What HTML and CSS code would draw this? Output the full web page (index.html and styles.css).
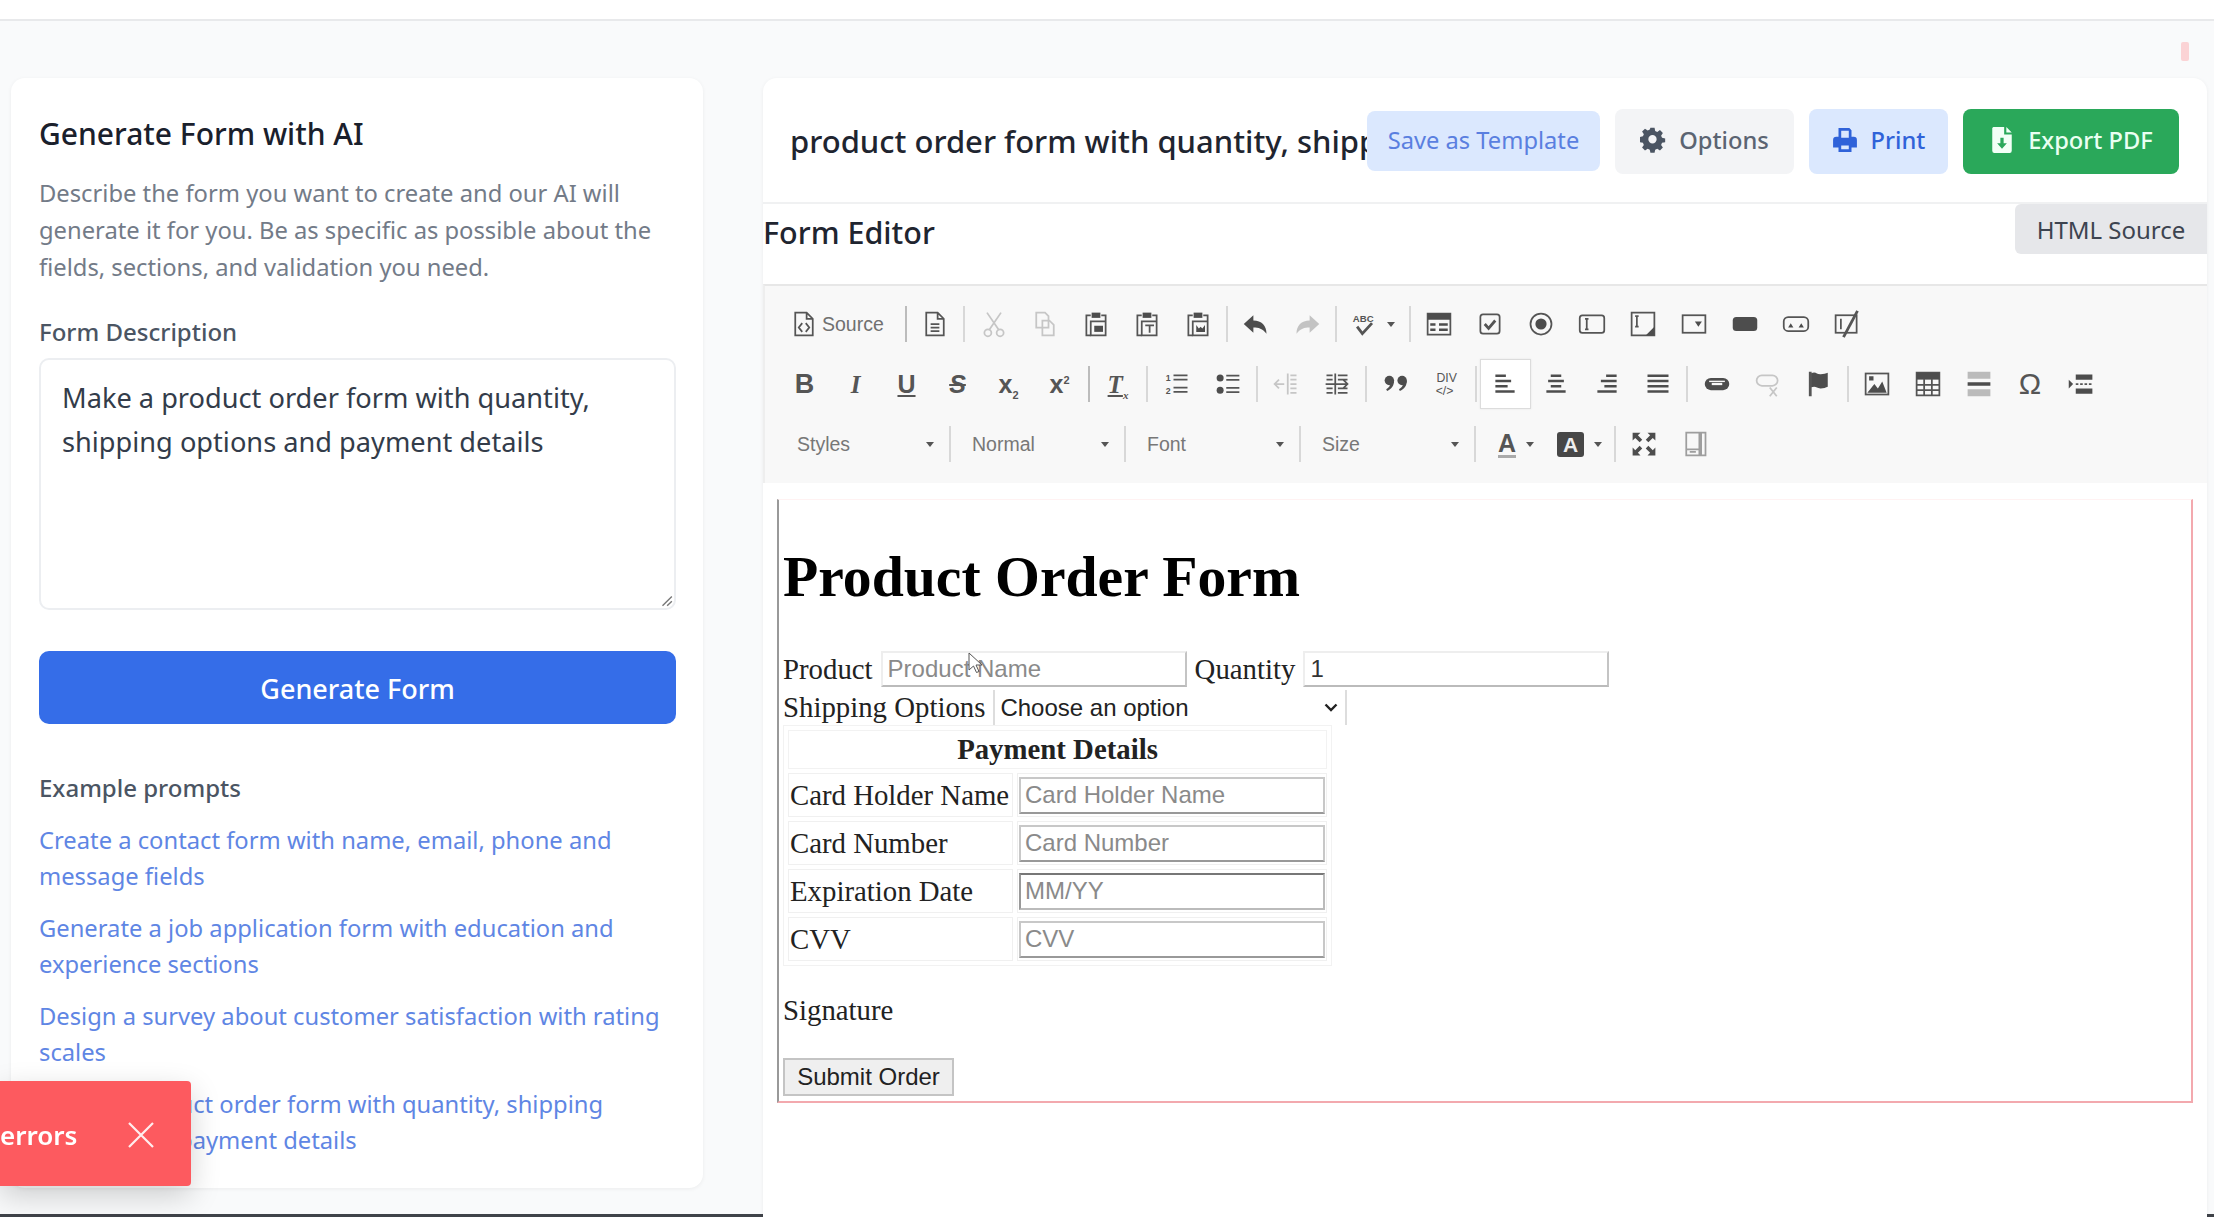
FILE: index.html
```html
<!DOCTYPE html>
<html lang="en">
<head>
    <meta charset="UTF-8">
    <meta name="viewport" content="width=device-width, initial-scale=1.0">
    <title>Generate Form with AI</title>
    <link rel="stylesheet" href="styles.css">
</head>
<body>
<div class="page">
    <div class="topbar"></div>
    <div class="strip"><span class="strip-mark"></span></div>

    <div class="main">
        <!-- left panel -->
        <aside class="panel">
            <h2 class="panel-title">Generate Form with AI</h2>
            <p class="panel-desc">Describe the form you want to create and our AI will generate it for you. Be as specific as possible about the fields, sections, and validation you need.</p>
            <label class="panel-label">Form Description</label>
            <div class="prompt-box">
                Make a product order form with quantity, shipping options and payment details
                <svg class="grip" viewBox="0 0 12 12"><path d="M11 3 3 11M11 7 7 11" stroke="#777" stroke-width="1.2" fill="none"/></svg>
            </div>
            <button class="generate-btn">Generate Form</button>
            <h3 class="examples-title">Example prompts</h3>
            <ul class="examples">
                <li>Create a contact form with name, email, phone and message fields</li>
                <li>Generate a job application form with education and experience sections</li>
                <li>Design a survey about customer satisfaction with rating scales</li>
                <li>Make a product order form with quantity, shipping options and payment details</li>
            </ul>
        </aside>

        <!-- right panel -->
        <section class="workspace">
            <div class="doc-head">
                <input class="doc-title" type="text" value="product order form with quantity, shipping options and payment details">
                <div class="actions">
                    <button class="act act-template">Save as Template</button>
                    <button class="act act-options">
                        <svg class="act-ic" viewBox="0 0 24 24"><path fill="#4b5563" fill-rule="evenodd" d="M10 1h4l.6 3 2 .9 2.6-1.7 2.8 2.8-1.7 2.6.9 2 3 .6v3.6l-3 .6-.9 2 1.7 2.6-2.8 2.8-2.6-1.7-2 .9-.6 3h-4l-.6-3-2-.9-2.6 1.7-2.8-2.8 1.7-2.6-.9-2-3-.6V9.800l3-.6.9-2-1.7-2.6 2.8-2.8 2.6 1.7 2-.9zM12 8a4 4 0 1 0 0 8 4 4 0 0 0 0-8z" transform="translate(0 -.2) scale(.96)"/></svg>
                        Options
                    </button>
                    <button class="act act-print">
                        <svg class="act-ic" viewBox="0 0 24 24"><path fill="#2f62d9" fill-rule="evenodd" d="M6 1h10l2 2v6h2a3 3 0 0 1 3 3v7h-5v4H6v-4H1v-7a3 3 0 0 1 3-3h2zm2.500 2.500V10h7V3.500zm0 13.500v3.500h7V17z"/></svg>
                        Print
                    </button>
                    <button class="act act-export">
                        <svg class="act-ic" viewBox="0 0 24 24"><path fill="#f2fff6" fill-rule="evenodd" d="M4 0h10v7h7v15a2 2 0 0 1-2 2H5a2 2 0 0 1-2-2V1zM16 0l5 5h-5zM10.500 10v5H7.500l4.500 5 4.500-5h-3v-5z"/></svg>
                        Export PDF
                    </button>
                </div>
            </div>

            <div class="editor-head">
                <h3 class="editor-title">Form Editor</h3>
                <button class="source-btn">HTML Source</button>
            </div>

            <div class="toolbar">
                <div class="tb-row">
                    <span class="tb-btn tb-source"><svg class="ic" viewBox="0 0 16 16"><path d="M3 1.500h6.500L13 5v9.500H3zM9.500 1.500V5H13" class="ol"/><path d="M7 7.500 5 10l2 2.500M9 7.500l2 2.500-2 2.500" class="ol"/></svg><span class="tb-text">Source</span></span>
                    <i class="sep"></i>
                    <span class="tb-btn"><svg class="ic" viewBox="0 0 16 16"><path d="M3 1.500h6.500L13 5v9.500H3zM9.500 1.500V5H13" class="ol"/><path d="M5.500 8h5M5.500 10h5M5.500 12h5" class="ol"/></svg></span>
                    <i class="sep sep-soft"></i>
                    <span class="tb-btn off"><svg class="ic" viewBox="0 0 16 16"><circle cx="4.500" cy="13" r="2" class="ol"/><circle cx="11.500" cy="13" r="2" class="ol"/><path d="M5.500 11 12 1.500M10.500 11 4 1.500" class="ol"/></svg></span>
                    <span class="tb-btn off"><svg class="ic" viewBox="0 0 16 16"><path d="M3 1.500h5l2 2V10H3zM6.500 6h4l2.500 2.500v6H6.500z" class="ol"/></svg></span>
                    <span class="tb-btn"><svg class="ic" viewBox="0 0 16 16"><path d="M5 3H2.500v11.500H5" class="ol"/><path d="M5.500 1.500h5v3h-5z" class="fl"/><path d="M11 3h2.500v4M5 6.500h8.500v8H5z" class="ol"/><path d="M7 9h5v3.500H7z" class="fl"/></svg></span>
                    <span class="tb-btn"><svg class="ic" viewBox="0 0 16 16"><path d="M5 3H2.500v11.500H5" class="ol"/><path d="M5.500 1.500h5v3h-5z" class="fl"/><path d="M11 3h2.500v4M5 6.500h8.500v8H5z" class="ol"/><path d="M7 8.800h5M9.500 8.800v4.200" class="ol"/></svg></span>
                    <span class="tb-btn"><svg class="ic" viewBox="0 0 16 16"><path d="M5 3H2.500v11.500H5" class="ol"/><path d="M5.500 1.500h5v3h-5z" class="fl"/><path d="M11 3h2.500v4M5 6.500h8.500v8H5z" class="ol"/><path d="M7 8.500v4h5v-4l-1.500 2-1-1-1 1z" class="fl"/></svg></span>
                    <i class="sep sep-soft"></i>
                    <span class="tb-btn"><svg class="ic" viewBox="0 0 16 16"><path d="M6.500 3 1 8l5.500 5v-3c3 0 5.200.6 7.500 3.500 0-4.500-2.800-7.500-7.500-7.500z" class="fl"/></svg></span>
                    <span class="tb-btn off"><svg class="ic" viewBox="0 0 16 16"><path d="M9.500 3 15 8l-5.500 5v-3c-3 0-5.200.6-7.500 3.500C2 9 4.800 6 9.500 6z" class="fl"/></svg></span>
                    <i class="sep sep-soft"></i>
                    <span class="tb-btn tb-spell"><svg class="ic" viewBox="0 0 16 16"><text x="1" y="7" class="ic-text">ABC</text><path d="m3.500 9.500 3 4 5.500-6" class="ol ol-thick"/></svg><i class="caret"></i></span>
                    <i class="sep sep-soft"></i>
                    <span class="tb-btn"><svg class="ic" viewBox="0 0 16 16"><path d="M1.500 2h13v12h-13z" class="ol"/><path d="M1.500 2h13v3.500h-13zM3 7.500h3v1.500H3zM8 7.500h5v1.500H8zM3 10.500h3V12H3zM8 10.500h5V12H8z" class="fl"/></svg></span>
                    <span class="tb-btn"><svg class="ic" viewBox="0 0 16 16"><rect x="2.500" y="2.500" width="11" height="11" rx="1.500" class="ol"/><path d="m5 8 2.200 2.500L11 6" class="ol ol-thick"/></svg></span>
                    <span class="tb-btn"><svg class="ic" viewBox="0 0 16 16"><circle cx="8" cy="8" r="6" class="ol"/><circle cx="8" cy="8" r="3.200" class="fl"/></svg></span>
                    <span class="tb-btn"><svg class="ic" viewBox="0 0 16 16"><rect x="1" y="3" width="14" height="10" rx="1.500" class="ol"/><path d="M5 5v6M4 5h2M4 11h2" class="ol"/></svg></span>
                    <span class="tb-btn"><svg class="ic" viewBox="0 0 16 16"><rect x="1.500" y="1.500" width="13" height="13" class="ol"/><path d="M4.500 3.500v6M3.500 3.500h2M3.500 9.500h2" class="ol"/><path d="M14.500 9.500v5h-5z" class="fl"/></svg></span>
                    <span class="tb-btn"><svg class="ic" viewBox="0 0 16 16"><rect x="1.500" y="3" width="13" height="10" class="ol"/><path d="M8.500 6.500h4l-2 3z" class="fl"/></svg></span>
                    <span class="tb-btn"><svg class="ic" viewBox="0 0 16 16"><rect x="1" y="4" width="14" height="8" rx="2" class="fl"/></svg></span>
                    <span class="tb-btn"><svg class="ic" viewBox="0 0 16 16"><rect x="1" y="4" width="14" height="8" rx="2.500" class="ol"/><path d="M3.500 10 5 7.500 6.500 10zM9.500 10 11 7.500 12.500 10z" class="fl"/></svg></span>
                    <span class="tb-btn"><svg class="ic" viewBox="0 0 16 16"><rect x="1.500" y="3" width="12" height="10" class="ol"/><path d="M4.500 5v6" class="ol"/><path d="M14 .5 6 15.500" class="ol ol-thick"/></svg></span>
                </div>

                <div class="tb-row">
                    <span class="tb-btn"><b class="gl gl-b">B</b></span>
                    <span class="tb-btn"><b class="gl gl-i">I</b></span>
                    <span class="tb-btn"><b class="gl gl-u">U</b></span>
                    <span class="tb-btn"><b class="gl gl-s">S</b></span>
                    <span class="tb-btn"><b class="gl gl-x">x<sub>2</sub></b></span>
                    <span class="tb-btn"><b class="gl gl-x">x<sup>2</sup></b></span>
                    <i class="sep"></i>
                    <span class="tb-btn"><b class="gl gl-i gl-clear">T<sub>x</sub></b></span>
                    <i class="sep sep-soft"></i>
                    <span class="tb-btn"><svg class="ic" viewBox="0 0 16 16"><text x="1.500" y="6.500" class="ic-text ic-num">1</text><text x="1.500" y="13.500" class="ic-text ic-num">2</text><path d="M6 3h8M6 5.500h8M6 10h8M6 12.500h8" class="ol"/></svg></span>
                    <span class="tb-btn"><svg class="ic" viewBox="0 0 16 16"><circle cx="3.500" cy="4.500" r="2" class="fl"/><circle cx="3.500" cy="11.500" r="2" class="fl"/><path d="M7 3.200h7.500M7 5.700h7.500M7 10.200h7.500M7 12.700h7.500" class="ol"/></svg></span>
                    <i class="sep sep-soft"></i>
                    <span class="tb-btn off"><svg class="ic" viewBox="0 0 16 16"><path d="M9 2v12M10.500 3H14M10.500 5.500H14M10.500 8H14M10.500 10.500H14M10.500 13H14M1.500 8H7M4 5.500 1.500 8 4 10.500" class="ol"/></svg></span>
                    <span class="tb-btn"><svg class="ic" viewBox="0 0 16 16"><path d="M7 2v12M2 3h3.500M2 5.500h3.500M2 10.500h3.500M2 13h3.500M8.500 3H14M8.500 5.500H14M8.500 10.500H14M8.500 13H14M1.500 8H14M11.500 5.500 14 8l-2.500 2.500" class="ol"/></svg></span>
                    <i class="sep sep-soft"></i>
                    <span class="tb-btn"><svg class="ic" viewBox="0 0 16 16"><circle cx="4.200" cy="6" r="2.700" class="fl"/><path d="M6.900 6c0 3-1.500 5-4 6l-.5-1c1.500-.8 2.300-2 2.300-3z" class="fl"/><circle cx="11.500" cy="6" r="2.700" class="fl"/><path d="M14.200 6c0 3-1.500 5-4 6l-.5-1c1.500-.8 2.300-2 2.300-3z" class="fl"/></svg></span>
                    <span class="tb-btn"><svg class="ic" viewBox="0 0 16 16"><text x="2" y="7" class="ic-text ic-div">DIV</text><text x="1.500" y="14" class="ic-text ic-div">&lt;/&gt;</text></svg></span>
                    <i class="sep sep-soft"></i>
                    <span class="tb-btn active"><svg class="ic" viewBox="0 0 16 16"><path d="M2.500 2.500h6v1.500h-6zM2.500 5.500h9V7h-9zM2.500 8.500h7V10h-7zM2.500 11.500h11V13h-11z" class="fl"/></svg></span>
                    <span class="tb-btn"><svg class="ic" viewBox="0 0 16 16"><path d="M5 2.500h6v1.500H5zM3.500 5.500h9V7h-9zM5 8.500h6V10H5zM2.500 11.500h11V13h-11z" class="fl"/></svg></span>
                    <span class="tb-btn"><svg class="ic" viewBox="0 0 16 16"><path d="M7.500 2.500h6v1.500h-6zM4.500 5.500h9V7h-9zM6.500 8.500h7V10h-7zM2.500 11.500h11V13h-11z" class="fl"/></svg></span>
                    <span class="tb-btn"><svg class="ic" viewBox="0 0 16 16"><path d="M2 2.500h12V4H2zM2 5.500h12V7H2zM2 8.500h12V10H2zM2 11.500h12V13H2z" class="fl"/></svg></span>
                    <i class="sep sep-soft"></i>
                    <span class="tb-btn"><svg class="ic" viewBox="0 0 16 16"><rect x="1" y="4.500" width="14" height="7" rx="3.500" class="fl"/><path d="M5 8h6" stroke="#f8f8f8" stroke-width="1.300"/><path d="M3.500 6.500h9" stroke="#f8f8f8" stroke-width=".8"/></svg></span>
                    <span class="tb-btn off"><svg class="ic" viewBox="0 0 16 16"><rect x="1.500" y="3" width="12" height="6" rx="3" class="ol"/><path d="m9 10 4 5M13 10l-4 5" class="ol"/></svg></span>
                    <span class="tb-btn"><svg class="ic" viewBox="0 0 16 16"><path d="M3 1v14" class="ol ol-thick"/><path d="M3.500 1.800c3-1.200 3 .8 5.500.6 1.500-.1 3-.5 4-.9v8c-1 .5-2.500.9-4 1-2.500.1-2.500-1.600-5.500-.6z" class="fl"/></svg></span>
                    <i class="sep sep-soft"></i>
                    <span class="tb-btn"><svg class="ic" viewBox="0 0 16 16"><rect x="1.500" y="2" width="13" height="12" class="ol"/><path d="m2.500 13 4-5 2 2.500 2.500-4 2.500 6.500zM3.500 3.500h2.500V6H3.500z" class="fl"/></svg></span>
                    <span class="tb-btn"><svg class="ic" viewBox="0 0 16 16"><path d="M1.500 1.500h13v13h-13z" class="ol"/><path d="M1.500 1.500h13v4h-13z" class="fl"/><path d="M1.500 8.500h13M1.500 11.500h13M5.800 5v9.500M10.200 5v9.500" class="ol"/></svg></span>
                    <span class="tb-btn"><svg class="ic" viewBox="0 0 16 16"><path d="M1.500 1h13v4h-13zM1.500 11h13v4h-13z" class="fl fl-soft"/><path d="M1.500 7h13v2h-13z" class="fl"/></svg></span>
                    <span class="tb-btn"><b class="gl gl-om">&Omega;</b></span>
                    <span class="tb-btn"><svg class="ic" viewBox="0 0 16 16"><path d="M1 5.500 3.500 8 1 10.500z" class="fl"/><path d="M5 2.500h9.500V5.500H5zM5 10.500h9.500v3H5z" class="fl"/><path d="M5 8h9.500" class="ol ol-dash"/></svg></span>
                </div>

                <div class="tb-row">
                    <span class="combo">Styles<i class="caret"></i></span><i class="sep sep-soft"></i>
                    <span class="combo">Normal<i class="caret"></i></span><i class="sep sep-soft"></i>
                    <span class="combo">Font<i class="caret"></i></span><i class="sep sep-soft"></i>
                    <span class="combo">Size<i class="caret"></i></span><i class="sep sep-soft"></i>
                    <span class="tb-btn tb-color"><b class="gl gl-a">A</b><i class="caret"></i></span>
                    <span class="tb-btn tb-color-bg"><b class="gl gl-abg">A</b><i class="caret"></i></span>
                    <i class="sep sep-soft"></i>
                    <span class="tb-btn"><svg class="ic" viewBox="0 0 16 16"><path d="M1.500 1.500h4.500L4.500 3 7 5.500 5.500 7 3 4.500 1.500 6zM14.500 1.500H10L11.500 3 9 5.500 10.500 7 13 4.500 14.500 6zM1.500 14.500H6L4.500 13 7 10.500 5.500 9 3 11.500 1.500 10zM14.500 14.500H10l1.500-1.500L9 10.500 10.500 9 13 11.500 14.500 10z" class="fl"/></svg></span>
                    <span class="tb-btn off-mid"><svg class="ic" viewBox="0 0 16 16"><path d="M3 1.500h7.500v13H3zM3 11h7.500M11.500 1.500h2.500v13h-2.500zM5 12.500h3.500" class="ol"/></svg></span>
                </div>
            </div>

            <!-- form preview -->
            <div class="preview">
                <div class="sheet">
                    <h1 class="f-title">Product Order Form</h1>
                    <div class="f-row">
                        <label class="f-label">Product</label>
                        <input class="f-input" type="text" placeholder="Product Name">
                        <label class="f-label">Quantity</label>
                        <input class="f-input" type="text" value="1">
                    </div>
                    <div class="f-row f-row-tight">
                        <label class="f-label">Shipping Options</label>
                        <select class="f-select"><option>Choose an option</option></select>
                    </div>
                    <table class="f-table">
                        <tr><th class="f-th" colspan="2">Payment Details</th></tr>
                        <tr><td class="f-td f-td-label">Card Holder Name</td><td class="f-td"><input class="f-cell-input" type="text" placeholder="Card Holder Name"></td></tr>
                        <tr><td class="f-td f-td-label">Card Number</td><td class="f-td"><input class="f-cell-input" type="text" placeholder="Card Number"></td></tr>
                        <tr><td class="f-td f-td-label">Expiration Date</td><td class="f-td"><input class="f-cell-input f-cell-dark" type="text" placeholder="MM/YY"></td></tr>
                        <tr><td class="f-td f-td-label">CVV</td><td class="f-td"><input class="f-cell-input" type="text" placeholder="CVV"></td></tr>
                    </table>
                    <p class="f-sign">Signature</p>
                    <button class="f-submit">Submit Order</button>
                    <svg class="cursor" viewBox="0 0 14 22"><path d="M1 1v17l4.500-4 3 6.500 2.500-1-3-6.500h6z" fill="#fff" stroke="#555" stroke-width="1"/></svg>
                </div>
            </div>
        </section>
    </div>
</div>

<!-- toast is partly off screen -->
<div class="toast">
    <span class="toast-text">errors</span>
    <svg class="toast-x" viewBox="0 0 26 26"><path d="M1 1l24 24M25 1 1 25" stroke="#fff" stroke-width="2.200" opacity=".9"/></svg>
</div>
</body>
</html>
```

FILE: styles.css
```css
* {
    box-sizing: border-box;
}
html, body {
    margin: 0;
    height: 100%;
    overflow: hidden;
}
body {
    font-family: "Noto Sans", sans-serif;
    background: #f9fafb;
    color: #1f2937;
}
button {
    font-family: inherit;
    border: none;
}

.page {
    height: 1217px;
    display: flex;
    flex-direction: column;
    border-bottom: 3px solid #3f4349;
}
.topbar {
    height: 21px;
    background: #fff;
    border-bottom: 2px solid #e8e9eb;
}
.strip {
    height: 57px;
    display: flex;
    justify-content: flex-end;
    padding: 21px 25px 0 0;
}
.strip-mark {
    width: 8px;
    height: 19px;
    background: #fbd3d5;
    border-radius: 2px;
}
.main {
    flex: 1;
    min-height: 0;
    display: flex;
    align-items: flex-start;
    gap: 60px;
    padding: 0 7px 0 11px;
}

/* left panel */
.panel {
    width: 692px;
    height: 1110px;
    flex: none;
    background: #fff;
    border-radius: 14px;
    box-shadow: 0 1px 4px rgba(0, 0, 0, .06);
    padding: 36px 27px 0 28px;
}
.panel-title {
    margin: 0;
    font-size: 30px;
    line-height: 40px;
    font-weight: 500;
    color: #1a202c;
}
.panel-desc {
    margin: 21px 0 0;
    font-size: 23.75px;
    line-height: 37px;
    color: #737b88;
}
.panel-label {
    display: block;
    margin-top: 28px;
    font-size: 24px;
    line-height: 36px;
    font-weight: 500;
    color: #4b5563;
}
.prompt-box {
    position: relative;
    margin-top: 8px;
    height: 252px;
    border: 2px solid #eceef1;
    border-radius: 10px;
    padding: 16px 21px;
    font-size: 27.2px;
    line-height: 43.5px;
    color: #333c4a;
}
.grip {
    position: absolute;
    right: 1px;
    bottom: 1px;
    width: 14px;
    height: 14px;
}
.generate-btn {
    display: block;
    width: 100%;
    height: 73px;
    margin-top: 41px;
    padding-top: 2px;
    border-radius: 10px;
    background: #356de8;
    color: #fff;
    font-size: 27px;
    font-weight: 500;
}
.examples-title {
    margin: 46px 0 0;
    font-size: 24px;
    line-height: 36px;
    font-weight: 500;
    color: #4b5563;
}
.examples {
    list-style: none;
    margin: 16px 0 0;
    padding: 0;
    font-size: 23.75px;
    line-height: 36px;
    color: #5f86e4;
}
.examples li {
    margin-bottom: 16px;
}

/* right panel */
.workspace {
    flex: 1;
    height: 1139px;
    background: #fff;
    border-radius: 14px 14px 0 0;
    box-shadow: 0 1px 4px rgba(0, 0, 0, .06);
    overflow: hidden;
}
.doc-head {
    height: 126px;
    display: flex;
    align-items: center;
    padding: 3px 28px 1px 27px;
    border-bottom: 2px solid #f0f1f2;
}
.doc-title {
    flex: 1;
    min-width: 0;
    padding: 0;
    border: none;
    outline: none;
    background: transparent;
    font-family: inherit;
    font-size: 31px;
    font-weight: 500;
    color: #1f2530;
}
.actions {
    display: flex;
    align-items: center;
    gap: 15px;
}
.act {
    height: 65px;
    display: flex;
    align-items: center;
    justify-content: center;
    gap: 13px;
    padding: 0 0 2px;
    border-radius: 8px;
    font-size: 23.7px;
    font-weight: 500;
}
.act-ic {
    width: 26px;
    height: 26px;
}
.act-template {
    width: 233px;
    height: 60px;
    background: #dbe8fe;
    color: #5a7fe0;
    font-weight: 400;
}
.act-options {
    width: 179px;
    background: #f3f4f6;
    color: #5b6472;
}
.act-print {
    width: 139px;
    background: #dbe8fe;
    color: #2f62d9;
}
.act-export {
    width: 216px;
    background: #2aa85a;
    color: #eafff2;
}

.editor-head {
    height: 80px;
    display: flex;
    justify-content: space-between;
    align-items: flex-start;
}
.editor-title {
    margin: 0;
    font-size: 30.5px;
    line-height: 56px;
    font-weight: 500;
    color: #1f2530;
}
.source-btn {
    width: 192px;
    height: 50px;
    background: #e6e7ea;
    border-radius: 6px 0 0 6px;
    color: #3d4450;
    font-size: 24px;
}

/* editor toolbar */
.toolbar {
    height: 199px;
    padding: 8px 0 0 14px;
    background: #f8f8f8;
    border-top: 2px solid #e7e7e7;
    border-left: 2px solid #eee;
}
.tb-row {
    height: 60px;
    display: flex;
    align-items: center;
}
.tb-btn {
    width: 51px;
    height: 50px;
    flex: none;
    display: flex;
    align-items: center;
    justify-content: center;
    color: #474747;
}
.tb-source {
    width: 123px;
    justify-content: flex-start;
    padding-left: 11px;
    gap: 4px;
}
.tb-spell {
    width: 66px;
    justify-content: flex-start;
    gap: 8px;
    padding-left: 11px;
}
.tb-color {
    width: 66px;
    gap: 10px;
    padding-left: 8px;
}
.tb-color-bg {
    width: 66px;
    gap: 10px;
    justify-content: flex-start;
    padding-left: 12px;
}
.tb-text {
    font: 19.5px "Liberation Sans", sans-serif;
    color: #707070;
}
.active {
    background: #fff;
    border: 1px solid #dcdcdc;
    box-shadow: 0 0 2px rgba(0, 0, 0, .08);
}
.off {
    opacity: .3;
}
.off-mid {
    opacity: .55;
}
.sep {
    width: 2px;
    height: 36px;
    flex: none;
    margin: 0 2.75px;
    background: #bcbcbc;
}
.sep-soft {
    background: #d8d8d8;
}
.ic {
    width: 28px;
    height: 28px;
    flex: none;
}
.ol {
    fill: none;
    stroke: #555;
    stroke-width: 1;
}
.ol-thick {
    stroke-width: 1.6;
}
.ol-dash {
    stroke-dasharray: 1.500 1;
}
.fl {
    fill: #4d4d4d;
}
.fl-soft {
    fill: #bbb;
}
.ic-text {
    font: bold 5.500px "Liberation Sans", sans-serif;
    fill: #555;
}
.ic-num {
    font-size: 5px;
}
.ic-div {
    font-weight: normal;
    font-size: 7px;
}
.gl {
    font-family: "Liberation Sans", sans-serif;
    font-size: 25px;
    line-height: 1;
    color: #555;
}
.gl sub, .gl sup {
    font-size: 11px;
    line-height: 0;
}
.gl-b {
    font-size: 27px;
}
.gl-i {
    font-style: italic;
    font-family: "Liberation Serif", serif;
}
.gl-u {
    text-decoration: underline;
}
.gl-s {
    text-decoration: line-through;
    font-style: italic;
}
.gl-clear {
    text-decoration: underline;
}
.gl-om {
    font-size: 30px;
    font-weight: normal;
}
.gl-a {
    border-bottom: 3px solid #aaa;
    line-height: 24px;
}
.gl-abg {
    background: #474747;
    color: #eee;
    padding: 2px 6px;
    border-radius: 3px;
    font-size: 21px;
}
.caret {
    width: 0;
    height: 0;
    flex: none;
    border-left: 4px solid transparent;
    border-right: 4px solid transparent;
    border-top: 5px solid #555;
}
.combo {
    width: 167.5px;
    height: 50px;
    flex: none;
    display: flex;
    align-items: center;
    justify-content: space-between;
    padding: 0 13px 0 18px;
    font: 19.5px "Liberation Sans", sans-serif;
    color: #777;
}

/* generated form */
.preview {
    padding: 16px 14px 0;
}
.sheet {
    position: relative;
    height: 604px;
    padding: 1px 0 0 4px;
    border-left: 2px solid #999;
    border-right: 2px solid #f3a9ae;
    border-bottom: 2px solid #f3a9ae;
    border-top: 1px solid #fff2f2;
    font-family: "Liberation Serif", serif;
    font-size: 28.8px;
    color: #222;
}
.f-title {
    margin: 44px 0 42px;
    font-size: 57.7px;
    line-height: 64px;
    font-weight: bold;
    color: #000;
}
.f-row {
    display: flex;
    align-items: center;
    gap: 8px;
    height: 36px;
}
.f-row-tight {
    margin-top: 2px;
}
.f-input {
    width: 306px;
    height: 36px;
    padding: 0 5px;
    border: 2px solid #eee;
    border-bottom-color: #bbb;
    border-right-color: #c4c4c4;
    font: 24px "Liberation Sans", sans-serif;
    color: #333;
}
.f-input::placeholder, .f-cell-input::placeholder {
    color: #8a8a8a;
}
.f-select {
    width: 354px;
    height: 35px;
    padding: 0 0 0 5px;
    border: none;
    border-left: 2px solid #ddd;
    border-right: 2px solid #ddd;
    border-radius: 0;
    appearance: none;
    background: #fff url("data:image/svg+xml,%3Csvg xmlns='http://www.w3.org/2000/svg' viewBox='0 0 14 9'%3E%3Cpath d='M1.500 1.500 7 7l5.500-5.500' fill='none' stroke='%23222' stroke-width='2.400'/%3E%3C/svg%3E") no-repeat right 7px center / 14px 9px;
    font: 24px "Liberation Sans", sans-serif;
    color: #222;
}
.f-table {
    width: 549px;
    border: 1px solid #f2f2f2;
    border-spacing: 4px;
    margin-top: 0;
}
.f-th {
    height: 39px;
    padding: 0;
    border: 1px solid #f2f2f2;
    font-weight: bold;
    text-align: center;
}
.f-td {
    height: 44px;
    padding: 1px;
    border: 1px solid #f0f0f0;
}
.f-td-label {
    white-space: nowrap;
    width: 225px;
}
.f-cell-input {
    display: block;
    width: 306px;
    height: 37px;
    padding: 0 4px;
    border: 2px solid #c8c8c8;
    border-bottom-color: #999;
    font: 24px "Liberation Sans", sans-serif;
}
.f-cell-dark {
    border-color: #777 #bbb #bbb #999;
}
.f-sign {
    margin: 26px 0 0;
    line-height: 36px;
}
.f-submit {
    display: block;
    width: 171px;
    height: 38px;
    margin-top: 30px;
    padding: 0;
    background: #efefef;
    border: 2px solid #c4c4c4;
    font: 24px "Liberation Sans", sans-serif;
    color: #222;
}
.cursor {
    position: absolute;
    left: 189px;
    top: 151px;
    width: 14px;
    height: 24px;
}

/* toast */
.toast {
    position: fixed;
    left: 0;
    top: 1081px;
    width: 191px;
    height: 105px;
    display: flex;
    align-items: center;
    justify-content: space-between;
    padding: 2px 37px 0 0;
    background: #fd5a5f;
    border-radius: 0 4px 4px 0;
    box-shadow: 0 10px 30px rgba(0, 0, 0, .18);
}
.toast-text {
    color: #fff;
    font-size: 26px;
    font-weight: 600;
}
.toast-x {
    width: 26px;
    height: 26px;
}
```
